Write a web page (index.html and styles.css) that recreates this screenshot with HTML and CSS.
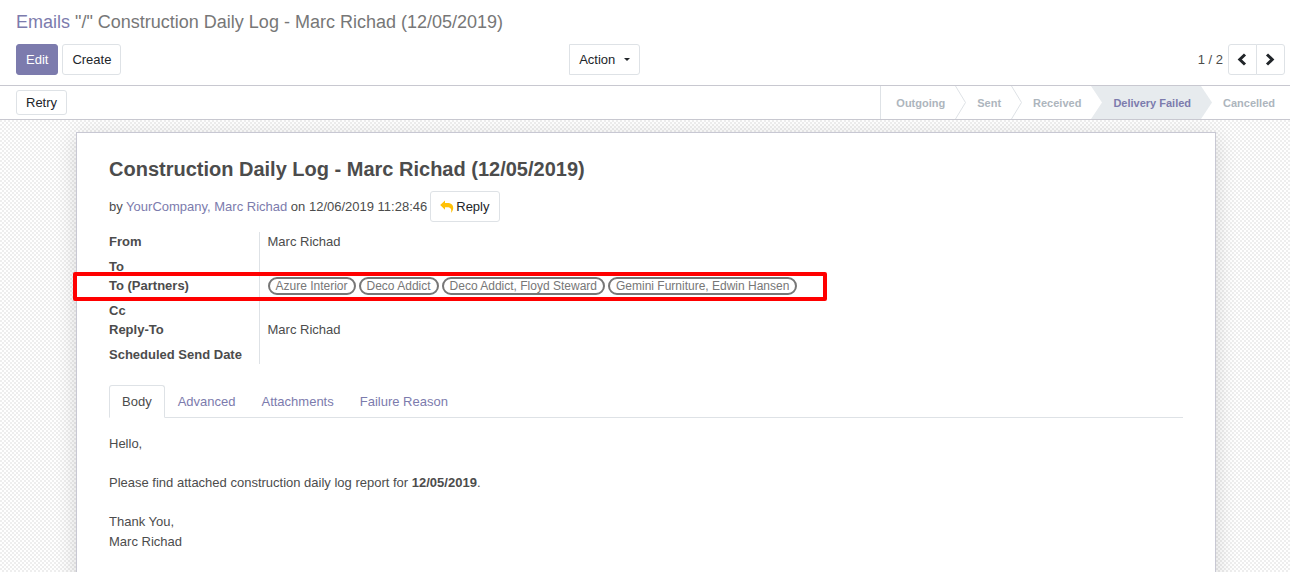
FILE: index.html
```html
<!DOCTYPE html>
<html lang="en">
<head>
<meta charset="utf-8">
<title>Construction Daily Log - Marc Richad (12/05/2019)</title>
<link rel="stylesheet" href="styles.css">
</head>
<body>
<header class="control-panel">
  <nav class="breadcrumb" aria-label="Breadcrumb"><a href="#">Emails</a> "/" Construction Daily Log - Marc Richad (12/05/2019)</nav>
  <div class="toolbar">
    <div class="toolbar-main">
      <button class="btn btn-primary" type="button">Edit</button>
      <button class="btn" type="button">Create</button>
    </div>
    <div class="toolbar-side">
      <button class="btn btn-menu" type="button">Action <span class="caret"></span></button>
      <div class="pager">
        <span>1 / 2</span>
        <div class="pager-buttons">
          <button class="btn" type="button" aria-label="Previous"><svg width="10" height="14" viewBox="0 0 10 14"><path d="M8 1.500 2.800 6.500 8 11.500" fill="none" stroke="currentColor" stroke-width="3"/></svg></button>
          <button class="btn" type="button" aria-label="Next"><svg width="10" height="14" viewBox="0 0 10 14"><path d="M2 1.500 7.200 6.500 2 11.500" fill="none" stroke="currentColor" stroke-width="3"/></svg></button>
        </div>
      </div>
    </div>
  </div>
</header>
<div class="statusbar">
  <button class="btn btn-small" type="button">Retry</button>
  <div class="stages">
    <button class="stage" type="button">Outgoing</button>
    <svg class="arrow" viewBox="0 0 11 33"><path d="M.5 0 10.5 16.500.5 33" fill="none" stroke="#dee2e6"/></svg>
    <button class="stage" type="button">Sent</button>
    <svg class="arrow" viewBox="0 0 11 33"><path d="M.5 0 10.5 16.500.5 33" fill="none" stroke="#dee2e6"/></svg>
    <button class="stage" type="button">Received</button>
    <svg class="arrow" viewBox="0 0 11 33"><path d="M0 0H11V33H0L11 16.500z" fill="#e7ebee"/></svg>
    <button class="stage stage-current" type="button" aria-current="step">Delivery Failed</button>
    <svg class="arrow" viewBox="0 0 11 33"><path d="M0 0 11 16.500 0 33z" fill="#e7ebee"/></svg>
    <button class="stage" type="button">Cancelled</button>
  </div>
</div>
<main class="content">
  <article class="sheet">
    <h1 class="title">Construction Daily Log - Marc Richad (12/05/2019)</h1>
    <div class="byline">
      <span>by <a href="#">YourCompany, Marc Richad</a> on 12/06/2019 11:28:46</span>
      <button class="btn btn-reply" type="button"><svg width="14" height="13" viewBox="0 0 14 13"><path d="M.2 5 5 .6v2.500h2.200c3.800 0 6 1.600 6 5 0 1.700-.7 3-1.600 4.300-.2.200-.5.100-.4-.2.500-3.600-.8-5-4-5H5v2.500z" fill="#ffc107"/></svg>Reply</button>
    </div>
    <table class="fields">
      <tr class="spaced"><th scope="row">From</th><td>Marc Richad</td></tr>
      <tr><th scope="row">To</th><td></td></tr>
      <tr class="spaced highlighted"><th scope="row">To (Partners)</th><td><div class="tags"><span class="tag">Azure Interior</span><span class="tag">Deco Addict</span><span class="tag">Deco Addict, Floyd Steward</span><span class="tag">Gemini Furniture, Edwin Hansen</span></div></td></tr>
      <tr><th scope="row">Cc</th><td></td></tr>
      <tr class="spaced"><th scope="row">Reply-To</th><td>Marc Richad</td></tr>
      <tr><th scope="row">Scheduled Send Date</th><td></td></tr>
    </table>
    <nav class="tabs">
      <a class="tab tab-active" href="#body">Body</a>
      <a class="tab" href="#advanced">Advanced</a>
      <a class="tab" href="#attachments">Attachments</a>
      <a class="tab" href="#failure">Failure Reason</a>
    </nav>
    <section class="message" id="body">
      <p>Hello,</p>
      <p>Please find attached construction daily log report for <b>12/05/2019</b>.</p>
      <p>Thank You,<br>Marc Richad</p>
    </section>
  </article>
</main>
</body>
</html>
```

FILE: styles.css
```css
*, *::before { box-sizing: border-box; }

body {
  display: flex;
  flex-direction: column;
  min-height: 100vh;
  margin: 0;
  background: #fff;
  color: #4c4c4c;
  font: 13px/20px "Liberation Sans", Arial, sans-serif;
}

a { color: #7c7bad; text-decoration: none; }

.btn {
  display: inline-flex;
  align-items: center;
  justify-content: center;
  height: 31px;
  padding: 0 9px;
  border: 1px solid #dee2e6;
  border-radius: 3px;
  background: #fff;
  color: #212529;
  font: inherit;
  cursor: pointer;
}

.btn-primary { border-color: #7c7bad; background: #7c7bad; color: #fff; }
.btn-small { height: 25px; }

.control-panel {
  padding: 10px 5px 10px 16px;
  border-bottom: 1px solid #c8c8d0;
}

.breadcrumb { margin-bottom: 10px; color: #777; font-size: 18px; line-height: 24px; }

.toolbar { display: grid; grid-template-columns: 17fr 22fr; }
.toolbar-main { display: flex; gap: 4px; }
.toolbar-side { display: flex; justify-content: space-between; }
.btn-menu { gap: 9px; border-radius: 0 3px 3px 0; }

.caret {
  border: 3px solid transparent;
  border-top-color: currentColor;
  border-bottom: 0;
}

.pager { display: flex; align-items: center; gap: 5px; }
.pager-buttons { display: flex; }
.pager-buttons .btn { width: 29px; padding: 0; }
.pager-buttons .btn:first-child { border-radius: 3px 0 0 3px; }
.pager-buttons .btn:last-child { margin-left: -1px; border-radius: 0 3px 3px 0; }

.statusbar {
  display: flex;
  align-items: center;
  justify-content: space-between;
  height: 34px;
  padding-left: 16px;
  border-bottom: 1px solid #c8c8d0;
}

.stages { display: flex; height: 33px; border-left: 1px solid #dee2e6; }

.stage {
  padding: 0 10px 0 11px;
  border: 0;
  background: #fff;
  color: #adb5bd;
  font: bold 11px/20px "Liberation Sans", Arial, sans-serif;
}

.stage:first-child { padding-left: 15px; }
.stage:last-child { padding-right: 15px; }
.stage-current { background: #e7ebee; color: #7c7bad; }
.arrow { width: 11px; height: 33px; }

.content {
  display: flex;
  flex: 1;
  justify-content: center;
  padding: 12px 16px 0 18px;
  overflow: hidden;
  background: repeating-conic-gradient(#fff 0 25%, #eee 0 50%) 0 0 / 4px 4px;
}

.sheet {
  width: 100%;
  max-width: 1140px;
  padding: 24px 32px 20px;
  border: 1px solid #c8c8d3;
  border-bottom: 0;
  background: #fff;
  box-shadow: 0 5px 20px rgba(0, 0, 0, 0.15);
}

.title { margin: 0 0 10px; font-size: 20px; line-height: 24px; }
.byline { display: flex; align-items: center; gap: 3px; margin-bottom: 10px; }
.btn-reply { gap: 2px; }

.fields { border-collapse: collapse; line-height: 19px; }
.fields th { width: 150px; padding: 0; text-align: left; vertical-align: top; border-right: 1px solid #dee2e6; }
.fields td { padding: 0 0 0 8px; vertical-align: top; }
.fields .spaced th, .fields .spaced td { padding-bottom: 6px; }

.highlighted th { position: relative; }

.highlighted th::before {
  content: "";
  position: absolute;
  top: -4px;
  left: -36px;
  width: 754px;
  height: 29px;
  border: 4px solid #f00;
  border-radius: 2px;
  pointer-events: none;
}

.tags { display: flex; gap: 3px; padding-top: 1px; }

.tag {
  height: 18px;
  padding: 0 6px;
  border: 2px solid #777;
  border-radius: 9px;
  color: #777;
  font-size: 12px;
  line-height: 14px;
}

.tabs { display: flex; margin-top: 21px; border-bottom: 1px solid #dee2e6; }

.tab {
  height: 33px;
  margin-bottom: -1px;
  padding: 6px 12px;
  border: 1px solid transparent;
  border-radius: 3px 3px 0 0;
}

.tab-active { border-color: #dee2e6 #dee2e6 #fff; color: #4c4c4c; }

.message { padding-top: 16px; }
.message p { margin: 0 0 19px; }
```
